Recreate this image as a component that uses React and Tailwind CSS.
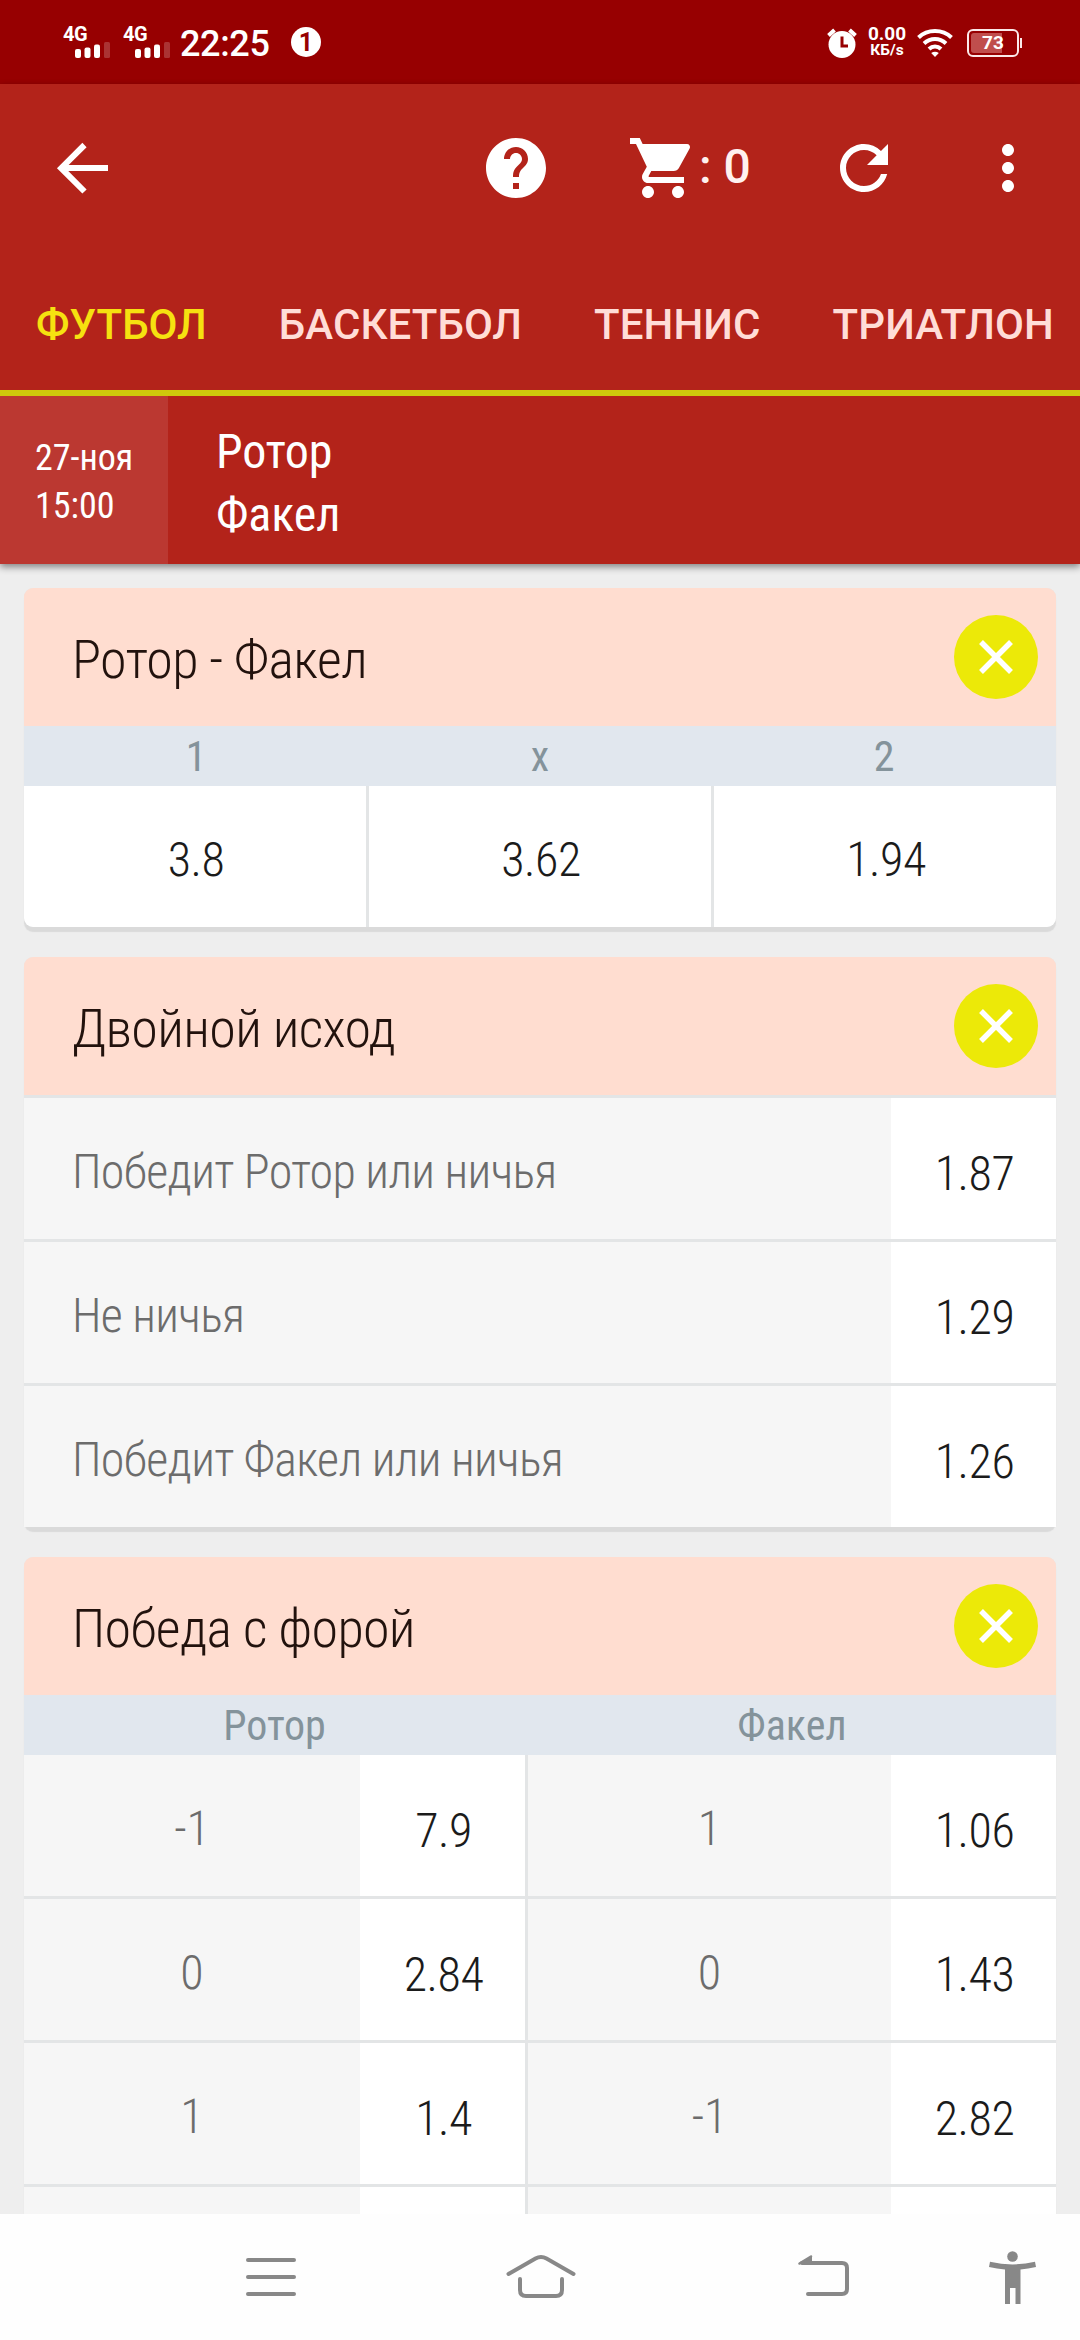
import { MdHelp, MdShoppingCart, MdRefresh, MdMoreVert } from 'react-icons/md';

const tabs = ['ФУТБОЛ', 'БАСКЕТБОЛ', 'ТЕННИС', 'ТРИАТЛОН'];

const mainOdds = [
  { name: '1', value: '3.8' },
  { name: 'x', value: '3.62' },
  { name: '2', value: '1.94' },
];

const doubleChance = [
  { name: 'Победит Ротор или ничья', value: '1.87' },
  { name: 'Не ничья', value: '1.29' },
  { name: 'Победит Факел или ничья', value: '1.26' },
];

const handicap = [
  { home: '-1', homeOdd: '7.9', away: '1', awayOdd: '1.06' },
  { home: '0', homeOdd: '2.84', away: '0', awayOdd: '1.43' },
  { home: '1', homeOdd: '1.4', away: '-1', awayOdd: '2.82' },
  { home: '', homeOdd: '', away: '', awayOdd: '' },
];

function Signal() {
  return (
    <div className="flex h-[32px] w-[60px] flex-col">
      <span className="h-[16px] text-[20px] leading-[16px] font-bold tracking-[-0.02em]">4G</span>
      <svg className="ml-[12px]" width="36" height="16" viewBox="0 0 36 16" fill="#fff">
        <rect x="0" y="7" width="6" height="9" rx="2" />
        <rect x="9.5" y="5.5" width="6" height="10.5" rx="2" />
        <rect x="19" y="2.5" width="6" height="13.5" rx="2" />
        <rect x="29" y="0" width="6" height="16" rx="1.5" fillOpacity="0.2" />
      </svg>
    </div>
  );
}

function StatusBar() {
  return (
    <div className="flex h-[84px] items-center bg-[#970001] pl-[63px] text-white">
      <Signal />
      <Signal />
      <span className="-ml-[3px] w-[111px] pt-[3px] text-[36px] leading-none font-medium tracking-[-0.01em]">22:25</span>
      <span className="flex h-[30px] w-[30px] items-center justify-center rounded-full bg-white pt-px text-[25px] leading-none font-bold text-[#970001]">
        1
      </span>

      <div className="ml-auto flex items-center pt-px pr-[58px]">
        {/* Alarm */}
        <svg width="32" height="32" viewBox="0 0 32 32" fill="none">
          <circle cx="16" cy="17.5" r="13.5" fill="#fff" />
          <path d="M2.5 8.5 8.5 3M29.5 8.5 23.5 3" stroke="#fff" strokeWidth="4" />
          <path d="M16 9.5V19H22" stroke="#970001" strokeWidth="3" />
        </svg>
        <div className="ml-[10px] flex w-[38px] flex-col items-center font-bold">
          <span className="h-[16px] text-[19px] leading-[14px]">0.00</span>
          <span className="h-[15px] text-[15.500px] leading-[15px]">КБ/s</span>
        </div>
        {/* Wi-Fi */}
        <svg className="ml-[11px]" width="36" height="30" viewBox="0 0 36 30" fill="none" stroke="#fff" strokeWidth="4">
          <path d="M1.5 9.5C10.5 .8 25.5 .8 34.5 9.5" />
          <path d="M7 15.5C13.5 9.5 22.5 9.5 29 15.5" />
          <path d="M12 21C15.5 17.6 20.5 17.6 24 21" />
          <path d="M14.2 25C16.5 23.3 19.5 23.3 21.8 25L18 29Z" fill="#fff" stroke="none" />
        </svg>
        <div className="ml-[14px] flex items-center">
          <div className="relative flex h-[28px] w-[52px] items-center justify-center rounded-[6px] border-2 border-[#fbe9e9]">
            <div className="absolute top-[2px] bottom-[2px] left-[2px] w-[31px] rounded-l-[3px] bg-[#c04e4d]" />
            <span className="relative text-[19px] leading-none font-bold">73</span>
          </div>
          <div className="ml-px h-[10px] w-[2px] bg-[#fbe9e9]" />
        </div>
      </div>
    </div>
  );
}

function Toolbar() {
  return (
    <div className="flex h-[168px] items-center pr-[36px] pl-[54px] text-white">
      <svg width="56" height="56" viewBox="0 0 56 56" fill="none" stroke="#fff" strokeWidth="6">
        <path d="M30.5 5 7.2 28.2 30.5 51.5M8 28H54" />
      </svg>
      <MdHelp className="ml-auto h-[72px] w-[72px]" />
      <div className="ml-[72px] flex w-[132px] items-center pl-[3px]">
        <MdShoppingCart className="h-[72px] w-[72px] shrink-0" />
        <span className="pb-[2px] text-[48px] leading-none font-medium whitespace-pre text-[#fff1ef]">: 0</span>
      </div>
      <MdRefresh className="ml-[72px] h-[72px] w-[72px]" />
      <MdMoreVert className="ml-[72px] h-[72px] w-[72px]" />
    </div>
  );
}

function Header() {
  return (
    <header className="relative z-10 bg-[#b3231a] shadow-[0_3px_7px_rgba(0,0,0,0.45)]">
      <Toolbar />
      <nav className="flex h-[144px] items-center gap-[72px] overflow-hidden border-b-[6px] border-[#cfc70c] pt-[7px] pl-[36px] text-[42px] leading-none font-medium tracking-[0.002em]">
        {tabs.map((tab, i) => (
          <a key={tab} className={i === 0 ? 'text-[#f6e110]' : 'text-[#ffddd7]'}>
            {tab}
          </a>
        ))}
      </nav>
      <div className="flex h-[168px] font-['Roboto_Condensed'] font-[440] text-white">
        <div className="flex w-[168px] flex-col justify-center bg-[#bb3831] pt-[4px] pl-[35px] text-[36px] leading-[48px]">
          <span>27-ноя</span>
          <span>15:00</span>
        </div>
        <div className="flex flex-col justify-center pt-[6px] pl-[48px] text-[48px] leading-[63px] tracking-[-0.003em]">
          <span>Ротор</span>
          <span>Факел</span>
        </div>
      </div>
    </header>
  );
}

function Card({ title, children }) {
  return (
    <section className="rounded-[9px] bg-[#e3e5e6] shadow-[0_5px_1px_#dadada]">
      <div className="flex h-[138px] items-center justify-between rounded-t-[9px] bg-[#ffddd0] pr-[18px] pl-[48px]">
        <h2 className="pt-[5px] text-[54px] leading-none font-light tracking-[-0.012em] text-[#22120d]">{title}</h2>
        <button className="flex h-[84px] w-[84px] items-center justify-center rounded-full bg-[#ece908]">
          <svg width="36" height="36" viewBox="0 0 36 36" stroke="#fff" strokeWidth="5.5">
            <path d="M3 3 33 33M33 3 3 33" />
          </svg>
        </button>
      </div>
      {children}
    </section>
  );
}

function Odd({ children, className = 'pt-[10px]' }) {
  return (
    <div className={`flex h-[141px] items-center justify-center bg-white pl-[2px] font-light tracking-[-0.01em] text-[#1b1b1b] ${className}`}>
      {children}
    </div>
  );
}

function Label({ children, className = '' }) {
  return (
    <div className={`flex h-[141px] items-center bg-[#f6f6f6] pt-[6px] font-light text-[#6c6c6c] ${className}`}>
      {children}
    </div>
  );
}

function NavBar() {
  return (
    <div className="flex h-[126px] shrink-0 bg-[#fefefe] pl-[244px]">
      <svg width="54" height="126" viewBox="0 0 54 126" fill="none" stroke="#888" strokeWidth="4" strokeLinecap="round">
        <path d="M4 46H50M4 63H50M4 80H50" />
      </svg>
      <svg className="ml-[208px]" width="70" height="126" viewBox="0 0 70 126" fill="none" stroke="#888" strokeWidth="4" strokeLinecap="round">
        <path d="M2.5 60 29.5 44.5Q35 41.5 40.5 44.5L67.5 60" />
        <path d="M14 65V76Q14 82 20 82H50Q56 82 56 76V65" />
      </svg>
      <svg className="ml-[220px]" width="54" height="126" viewBox="0 0 54 126" fill="none" stroke="#888" strokeWidth="4" strokeLinecap="round">
        <path d="M6 49H46Q51 49 51 54V75Q51 80 46 80H12" />
        <path d="M2.5 49.5 16 41.5V49.5Z" fill="#888" stroke="none" />
        <path d="M3.5 49.5 15 42.5" strokeWidth="2.5" />
      </svg>
      <svg className="ml-[138px]" width="50" height="126" viewBox="0 0 50 126" fill="#888">
        <circle cx="24.5" cy="42.5" r="5.3" />
        <path d="M2 47.8Q24.5 53 47 47.8L48 53Q40 54.8 32.5 55.5V90H27.5V74H22V90H17V55.5Q9 54.8 1 53Z" />
      </svg>
    </div>
  );
}

export default function App() {
  return (
    <div className="flex h-[2340px] w-[1080px] flex-col overflow-hidden bg-[#eeeeee] font-['Roboto',sans-serif]">
      <StatusBar />
      <Header />

      <main className="flex min-h-0 flex-1 flex-col gap-[30px] overflow-hidden px-[24px] pt-[24px] font-['Roboto_Condensed'] text-[48px] leading-none">
        <Card title="Ротор - Факел">
          <div className="grid h-[60px] grid-cols-3 items-center bg-[#e1e7ee] pt-px text-center text-[42px] font-[440] text-[#84939b]">
            {mainOdds.map((odd) => (
              <span key={odd.name}>{odd.name}</span>
            ))}
          </div>
          <div className="grid grid-cols-3 gap-[3px]">
            {mainOdds.map((odd) => (
              <Odd key={odd.name} className="pt-[6px] first:rounded-bl-[9px] last:rounded-br-[9px]">
                {odd.value}
              </Odd>
            ))}
          </div>
        </Card>

        <Card title="Двойной исход">
          <div className="flex flex-col gap-[3px] pt-[3px]">
            {doubleChance.map((row) => (
              <div key={row.name} className="grid grid-cols-[1fr_165px]">
                <Label className="pl-[48px] tracking-[-0.014em]">{row.name}</Label>
                <Odd>{row.value}</Odd>
              </div>
            ))}
          </div>
        </Card>

        <Card title="Победа с форой">
          <div className="grid h-[60px] grid-cols-[501px_1fr] items-center gap-[3px] bg-[#e1e7ee] pt-px text-center text-[42px] font-[440] text-[#84939b]">
            <span>Ротор</span>
            <span>Факел</span>
          </div>
          <div className="flex flex-col gap-[3px]">
            {handicap.map((row, i) => (
              <div key={i} className="grid grid-cols-[501px_1fr] gap-[3px]">
                <div className="grid grid-cols-[1fr_165px]">
                  <Label className="justify-center">{row.home}</Label>
                  <Odd>{row.homeOdd}</Odd>
                </div>
                <div className="grid grid-cols-[1fr_165px]">
                  <Label className="justify-center">{row.away}</Label>
                  <Odd>{row.awayOdd}</Odd>
                </div>
              </div>
            ))}
          </div>
        </Card>
      </main>

      <NavBar />
    </div>
  );
}
